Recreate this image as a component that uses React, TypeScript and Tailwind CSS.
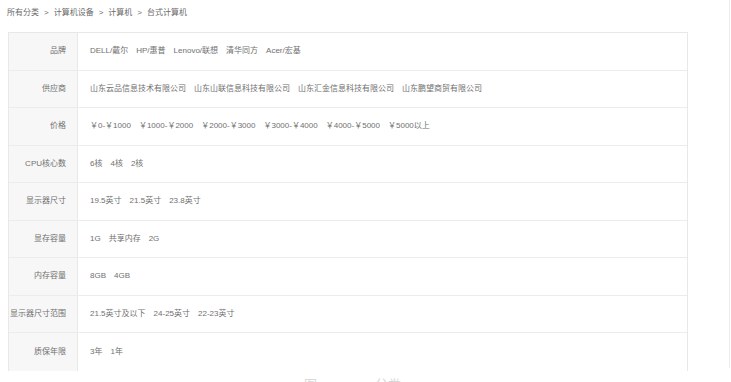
import React from "react";

const rows: { label: string; values: string[] }[] = [
  { label: "品牌", values: ["DELL/戴尔", "HP/惠普", "Lenovo/联想", "清华同方", "Acer/宏基"] },
  { label: "供应商", values: ["山东云品信息技术有限公司", "山东山联信息科技有限公司", "山东汇金信息科技有限公司", "山东鹏望商贸有限公司"] },
  { label: "价格", values: ["￥0-￥1000", "￥1000-￥2000", "￥2000-￥3000", "￥3000-￥4000", "￥4000-￥5000", "￥5000以上"] },
  { label: "CPU核心数", values: ["6核", "4核", "2核"] },
  { label: "显示器尺寸", values: ["19.5英寸", "21.5英寸", "23.8英寸"] },
  { label: "显存容量", values: ["1G", "共享内存", "2G"] },
  { label: "内存容量", values: ["8GB", "4GB"] },
  { label: "显示器尺寸范围", values: ["21.5英寸及以下", "24-25英寸", "22-23英寸"] },
  { label: "质保年限", values: ["3年", "1年"] },
];

export default function App() {
  return (
    <div
      className="w-[731px] h-[382px] overflow-hidden bg-white text-[#707070] flex"
      style={{ fontFamily: '"Liberation Sans", "Noto Sans CJK SC", sans-serif' }}
    >
      <div className="w-[729px] flex flex-col">
        <div className="shrink-0 h-[26px] pl-[7px] pt-[8px] text-[8px] leading-[10px] flex items-start text-[#6a6a6a]">
          <span>所有分类</span>
          <span className="mx-[5px]">&gt;</span>
          <span>计算机设备</span>
          <span className="mx-[5px]">&gt;</span>
          <span>计算机</span>
          <span className="mx-[5px]">&gt;</span>
          <span>台式计算机</span>
        </div>
        <div className="shrink-0 mt-[6px] ml-[8px] w-[680px] border-t border-l border-r border-[#e8e8e8] flex flex-col">
          {rows.map((r, i) => (
            <div
              key={r.label}
              className={
                "shrink-0 flex h-[37.5px] " + (i < rows.length - 1 ? "border-b border-[#ececec]" : "")
              }
            >
              <div className="w-[69px] shrink-0 bg-[#f7f7f7] border-r border-[#e8e8e8] flex items-center justify-end pr-[11px] text-[8px] whitespace-nowrap">
                {r.label}
              </div>
              <div className="flex items-center pl-[12px] gap-[8px] text-[8px] whitespace-nowrap">
                {r.values.map((v) => (
                  <span key={v}>{v}</span>
                ))}
              </div>
            </div>
          ))}
        </div>
        <div className="shrink-0 mt-[7px] flex gap-[58px] text-[13px] leading-[14px] text-[#d8d8d8] pl-[304px]">
          <span>图</span>
          <span>分类</span>
        </div>
      </div>
      <div className="w-px h-[368px] bg-[#ececec]" />
    </div>
  );
}
